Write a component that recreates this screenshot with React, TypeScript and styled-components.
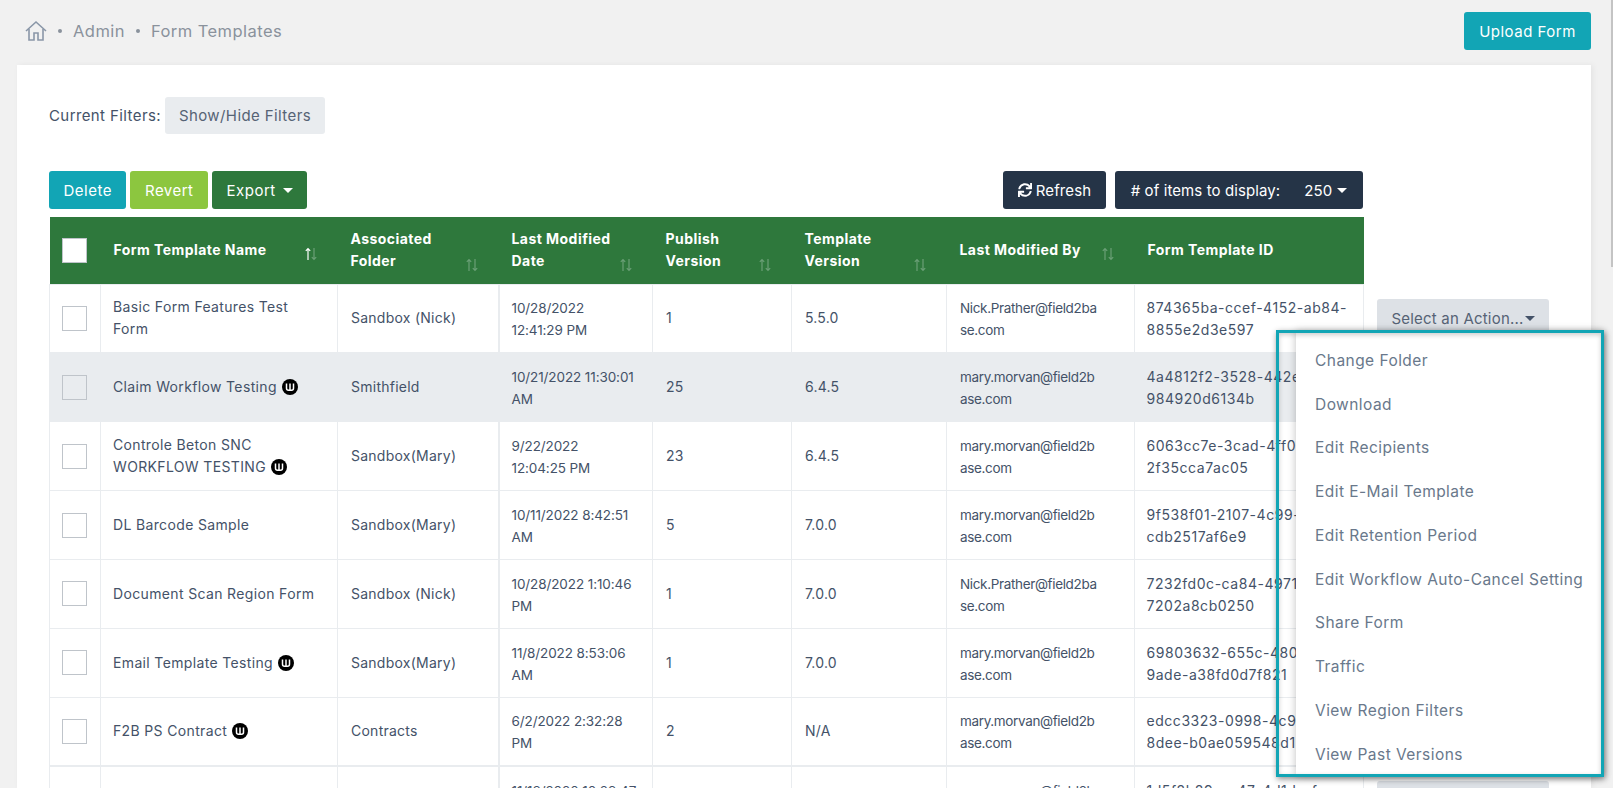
import React, { ReactElement } from 'react';
import styled, { createGlobalStyle } from 'styled-components';
import { FaSync } from 'react-icons/fa';

const GlobalStyle = createGlobalStyle`
  html, body {
    margin: 0;
    height: 100%;
    overflow: hidden;
    background: #f1f1f1;
    font-family: Inter, "Open Sans", sans-serif;
    color: #445268;
  }
`;

const Page = styled.div`
  position: relative;
  height: 788px;
  overflow: hidden;
`;

const TopBar = styled.div`
  display: flex;
  align-items: center;
  justify-content: space-between;
  height: 65px;
  box-sizing: border-box;
  padding: 12px 22px 15px 25px;
`;

const Crumbs = styled.div`
  display: flex;
  align-items: center;
  gap: 11px;
  font-size: 16.5px;
  letter-spacing: 0.45px;
  color: #8a929c;
`;

const Dot = styled.span`
  width: 4px;
  height: 4px;
  border-radius: 50%;
  background: #8a929c;
`;

const Button = styled.button<{ $bg: string; $fg?: string }>`
  display: inline-flex;
  align-items: center;
  justify-content: center;
  height: 38px;
  box-sizing: border-box;
  padding: 0 14.5px;
  border: 0;
  border-radius: 3px;
  background: ${(p) => p.$bg};
  color: ${(p) => p.$fg || '#fff'};
  font-family: inherit;
  font-size: 15px;
  letter-spacing: 0.5px;
  white-space: nowrap;
`;

const UploadButton = styled(Button)`
  width: 127px;
  padding: 0;
`;

const DarkButton = styled(Button)<{ $width: number }>`
  width: ${(p) => p.$width}px;
  padding: 0;
  letter-spacing: 0.1px;
`;

const RefreshIcon = styled(FaSync)`
  margin-right: 4px;
`;

const PerPage = styled.span`
  margin-left: 24px;
`;

const Caret = styled.span<{ $gap?: number; $color?: string }>`
  display: inline-block;
  margin-left: ${(p) => p.$gap ?? 4}px;
  border-top: 5px solid ${(p) => p.$color || '#fff'};
  border-left: 5px solid transparent;
  border-right: 5px solid transparent;
`;

const Card = styled.div`
  margin: 0 22px 0 17px;
  padding: 32px 0 0 32px;
  height: 723px;
  box-sizing: border-box;
  background: #fff;
  box-shadow: 2px 0 6px rgba(0, 0, 0, 0.06);
`;

const Filters = styled.div`
  display: flex;
  align-items: center;
  gap: 4px;
  height: 37px;
  font-size: 15px;
  letter-spacing: 0.4px;
  color: #445268;
`;

const FilterButton = styled(Button)`
  width: 160px;
  height: 37px;
  padding: 0;
  letter-spacing: 0.4px;
`;

const Toolbar = styled.div`
  display: flex;
  justify-content: space-between;
  width: 1314px;
  margin: 37px 0 8px;
`;

const ButtonGroup = styled.div<{ $gap: number }>`
  display: flex;
  gap: ${(p) => p.$gap}px;
`;

const Table = styled.table`
  table-layout: fixed;
  width: 1499px;
  border-collapse: collapse;
  line-height: 22px;
`;

const Th = styled.th<{ $filled?: boolean }>`
  height: 67px;
  box-sizing: border-box;
  padding: 0 20px 0 13px;
  background: ${(p) => (p.$filled === false ? 'transparent' : '#2e783c')};
  color: #fff;
  font-size: 14px;
  letter-spacing: 0.45px;
  font-weight: 700;
  text-align: left;
`;

const HeadInner = styled.div`
  display: flex;
  align-items: flex-end;
  justify-content: space-between;
  white-space: pre;
`;

const Row = styled.tr`
  height: 68.86px;
`;

type CellKind = 'name' | 'folder' | 'date' | 'plain' | 'mail' | 'id';

// the reference font runs wider on letters and digits than on the dates and e-mails, so each column is tuned
const CELL_STYLES: Record<CellKind, { size: number; ls: number; left: number; top: number }> = {
  name: { size: 14, ls: 0.35, left: 12, top: 0 },
  folder: { size: 14, ls: 0.25, left: 13, top: 0 },
  date: { size: 13.5, ls: -0.1, left: 12, top: 2 },
  plain: { size: 14, ls: 0.2, left: 13, top: 0 },
  mail: { size: 13.5, ls: -0.35, left: 13, top: 2 },
  id: { size: 14, ls: 0.54, left: 11.5, top: 2 },
};

const Td = styled.td<{ $kind?: CellKind; $hover?: boolean; $thickLeft?: boolean; $thickBottom?: boolean }>`
  box-sizing: border-box;
  padding: ${(p) => CELL_STYLES[p.$kind || 'plain'].top}px 0 0 ${(p) => CELL_STYLES[p.$kind || 'plain'].left}px;
  border: 1px solid #e9ecef;
  border-left-width: ${(p) => (p.$thickLeft ? 2 : 1)}px;
  border-bottom-width: ${(p) => (p.$thickBottom ? 2 : 1)}px;
  background: ${(p) => (p.$hover ? '#e9ecef' : '#fff')};
  color: #445268;
  font-size: ${(p) => CELL_STYLES[p.$kind || 'plain'].size}px;
  letter-spacing: ${(p) => CELL_STYLES[p.$kind || 'plain'].ls}px;
  white-space: pre;
  overflow: hidden;
  vertical-align: middle;
`;

const ActionTd = styled.td`
  padding: 0 0 0 13px;
  vertical-align: middle;
`;

const CheckCell = styled(Td)`
  padding: 0 0 0 12px;
`;

const HeadCheckCell = styled(Th)`
  padding: 0 0 0 12px;
`;

const Check = styled.span<{ $head?: boolean }>`
  display: block;
  width: 25px;
  height: 25px;
  box-sizing: border-box;
  border: 1px solid #bfc4ca;
  background: ${(p) => (p.$head ? '#fff' : 'transparent')};
`;

const SelectButton = styled(Button)`
  width: 172px;
  padding: 0;
  letter-spacing: 0.2px;
`;

const Menu = styled.div`
  position: absolute;
  left: 1296px;
  top: 331px;
  width: 307px;
  height: 445px;
  box-sizing: border-box;
  padding-top: 7.5px;
  background: #fff;
  box-shadow: 0 0 8px rgba(0, 0, 0, 0.25);
`;

const MenuItem = styled.div`
  display: flex;
  align-items: center;
  height: 43.75px;
  padding-left: 19px;
  font-size: 15.5px;
  letter-spacing: 0.45px;
  color: #69788b;
  white-space: nowrap;
`;

const Highlight = styled.div`
  position: absolute;
  left: 1276px;
  top: 330px;
  width: 328px;
  height: 447px;
  box-sizing: border-box;
  border: 3px solid #12a5b5;
  box-shadow: 1px 2px 6px rgba(0, 0, 0, 0.45), inset 0 2px 5px rgba(0, 0, 0, 0.2);
`;

const ScrollThumb = styled.div`
  position: absolute;
  right: 0;
  top: 0;
  width: 2px;
  height: 267px;
  background: #c4c4c4;
`;

const BadgeSvg = styled.svg`
  margin-left: 5px;
  vertical-align: -3px;
`;

const HomeIcon = () => (
  <svg width="22" height="22" viewBox="0 0 22 22" fill="none" stroke="#8a97a8" strokeWidth="1.6">
    <path d="M1 11 11 2l10 9" />
    <path d="M4 9v11h5v-7h4v7h5V9" />
  </svg>
);

const SortIcon = ({ active }: { active?: boolean }) => (
  <svg width="14" height="14" viewBox="0 0 14 14" fill="none" strokeWidth="1.2">
    <path d="M4 13V1.5M1.8 3.8 4 1.5l2.2 2.3" stroke={active ? '#fff' : '#6a9f76'} />
    <path d="M10 1v11.5M7.8 10.2l2.2 2.3 2.2-2.3" stroke="#6a9f76" />
  </svg>
);

const WorkflowBadge = () => (
  <BadgeSvg width="16" height="16" viewBox="0 0 16 16">
    <circle cx="8" cy="8" r="8" fill="#000" />
    <path d="M4.5 4.5v4.7a2 2 0 0 0 2 2h3a2 2 0 0 0 2-2V4.5M8 4.5v6" fill="none" stroke="#fff" strokeWidth="1.5" />
  </BadgeSvg>
);

const columns = [
  { title: 'Form Template Name', width: 237, active: true },
  { title: 'Associated\nFolder', width: 161 },
  { title: 'Last Modified\nDate', width: 154 },
  { title: 'Publish\nVersion', width: 139 },
  { title: 'Template\nVersion', width: 155 },
  { title: 'Last Modified By', width: 188 },
  { title: 'Form Template ID', width: 229, noSort: true },
];

const NICK = 'Nick.Prather@field2ba\nse.com';
const MARY = 'mary.morvan@field2b\nase.com';

const rows = [
  { name: 'Basic Form Features Test\nForm', folder: 'Sandbox (Nick)', date: '10/28/2022\n12:41:29 PM', pub: '1', tpl: '5.5.0', by: NICK, id: '874365ba-ccef-4152-ab84-\n8855e2d3e597' },
  { name: 'Claim Workflow Testing', badge: true, folder: 'Smithfield', date: '10/21/2022 11:30:01\nAM', pub: '25', tpl: '6.4.5', by: MARY, id: '4a4812f2-3528-442e-a0b4-\n984920d6134b' },
  { name: 'Controle Beton SNC\nWORKFLOW TESTING', badge: true, folder: 'Sandbox(Mary)', date: '9/22/2022\n12:04:25 PM', pub: '23', tpl: '6.4.5', by: MARY, id: '6063cc7e-3cad-4ff0-9c1d-\n2f35cca7ac05' },
  { name: 'DL Barcode Sample', folder: 'Sandbox(Mary)', date: '10/11/2022 8:42:51\nAM', pub: '5', tpl: '7.0.0', by: MARY, id: '9f538f01-2107-4c99-8e2a-\ncdb2517af6e9' },
  { name: 'Document Scan Region Form', folder: 'Sandbox (Nick)', date: '10/28/2022 1:10:46\nPM', pub: '1', tpl: '7.0.0', by: NICK, id: '7232fd0c-ca84-4971-b5d3-\n7202a8cb0250' },
  { name: 'Email Template Testing', badge: true, folder: 'Sandbox(Mary)', date: '11/8/2022 8:53:06\nAM', pub: '1', tpl: '7.0.0', by: MARY, id: '69803632-655c-480c-\n9ade-a38fd0d7f821' },
  { name: 'F2B PS Contract', badge: true, folder: 'Contracts', date: '6/2/2022 2:32:28\nPM', pub: '2', tpl: 'N/A', by: MARY, id: 'edcc3323-0998-4c95-\n8dee-b0ae059548d1' },
  { name: '', folder: '', date: '11/18/2020 10:29:47\nAM', pub: '', tpl: '', by: MARY, id: '1d5f2b89-ae47-4d1d-afae-\n5c7e2b10d3a4' },
];

const menuItems = [
  'Change Folder',
  'Download',
  'Edit Recipients',
  'Edit E-Mail Template',
  'Edit Retention Period',
  'Edit Workflow Auto-Cancel Setting',
  'Share Form',
  'Traffic',
  'View Region Filters',
  'View Past Versions',
];

const App = (): ReactElement => (
  <Page>
    <GlobalStyle />
    <TopBar>
      <Crumbs>
        <HomeIcon />
        <Dot />
        <span>Admin</span>
        <Dot />
        <span>Form Templates</span>
      </Crumbs>
      <UploadButton $bg="#12a5b5">Upload Form</UploadButton>
    </TopBar>
    <Card>
      <Filters>
        Current Filters:
        <FilterButton $bg="#e9ecef" $fg="#566375">Show/Hide Filters</FilterButton>
      </Filters>
      <Toolbar>
        <ButtonGroup $gap={4}>
          <Button $bg="#12a5b5">Delete</Button>
          <Button $bg="#8cc63f">Revert</Button>
          <Button $bg="#2e783c">
            Export
            <Caret $gap={7} />
          </Button>
        </ButtonGroup>
        <ButtonGroup $gap={9}>
          <DarkButton $bg="#253447" $width={103}>
            <RefreshIcon size={14} />
            Refresh
          </DarkButton>
          <DarkButton $bg="#253447" $width={248}>
            # of items to display:
            <PerPage>250</PerPage>
            <Caret $gap={5} />
          </DarkButton>
        </ButtonGroup>
      </Toolbar>
      <Table>
        <colgroup>
          <col width={51} />
          {columns.map((c) => <col key={c.title} width={c.width} />)}
          <col width={185} />
        </colgroup>
        <thead>
          <tr>
            <HeadCheckCell><Check $head /></HeadCheckCell>
            {columns.map((c) => (
              <Th key={c.title}>
                <HeadInner>
                  <span>{c.title}</span>
                  {!c.noSort && <SortIcon active={c.active} />}
                </HeadInner>
              </Th>
            ))}
            <Th $filled={false} />
          </tr>
        </thead>
        <tbody>
          {rows.map((row, index) => {
            const hover = index === 1;
            const last = index === 6;
            return (
              <Row key={row.id}>
                <CheckCell $hover={hover} $thickBottom={last}><Check /></CheckCell>
                <Td $kind="name" $hover={hover} $thickBottom={last}>
                  {row.name}
                  {row.badge && <WorkflowBadge />}
                </Td>
                <Td $kind="folder" $hover={hover} $thickBottom={last}>{row.folder}</Td>
                <Td $kind="date" $hover={hover} $thickBottom={last} $thickLeft>{row.date}</Td>
                <Td $hover={hover} $thickBottom={last}>{row.pub}</Td>
                <Td $hover={hover} $thickBottom={last}>{row.tpl}</Td>
                <Td $kind="mail" $hover={hover} $thickBottom={last}>{row.by}</Td>
                <Td $kind="id" $hover={hover} $thickBottom={last}>{row.id}</Td>
                <ActionTd>
                  <SelectButton $bg="#dde1e6" $fg="#566375">
                    Select an Action...
                    <Caret $gap={1} $color="#445268" />
                  </SelectButton>
                </ActionTd>
              </Row>
            );
          })}
        </tbody>
      </Table>
    </Card>
    <Menu>
      {menuItems.map((item) => <MenuItem key={item}>{item}</MenuItem>)}
    </Menu>
    <Highlight />
    <ScrollThumb />
  </Page>
);

export default App;
